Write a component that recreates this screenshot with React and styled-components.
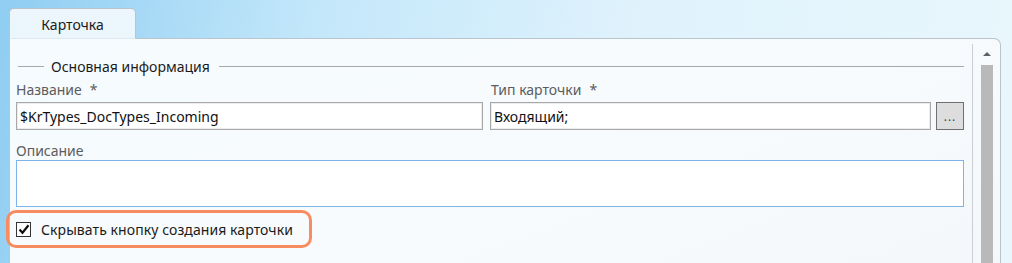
import React from "react";
import styled, { createGlobalStyle } from "styled-components";

const GlobalStyle = createGlobalStyle`
  html, body {
    margin: 0;
    padding: 0;
  }
  body {
    font-family: "Noto Sans", "Open Sans", sans-serif;
    font-size: 14px;
    color: #1b1b1b;
  }
`;

const Screen = styled.div`
  width: 1012px;
  height: 263px;
  box-sizing: border-box;
  overflow: hidden;
  padding: 8px 11px 0 9px;
  display: flex;
  flex-direction: column;
  background: linear-gradient(100deg, #8fcdf2 0%, #c3e7fa 30%, #dff2fc 60%, #e9f7fc 100%);
`;

const TabStrip = styled.div`
  display: flex;
  position: relative;
  z-index: 1;
  margin-bottom: -1px;
`;

const Tab = styled.div`
  width: 127px;
  height: 31px;
  box-sizing: border-box;
  display: flex;
  align-items: center;
  justify-content: center;
  border: 1px solid #b9c4cc;
  border-bottom: 1px solid #dde8f0;
  border-radius: 5px 5px 0 0;
  background: linear-gradient(180deg, #edf6fd 0%, #eaf5fc 100%);
  font-size: 14px;
  color: #1b1b1b;
  padding-top: 1px;
`;

const Panel = styled.div`
  flex: 1;
  display: flex;
  border: 1px solid #b9c4cc;
  border-bottom: none;
  border-radius: 0 7px 0 0;
  background: linear-gradient(160deg, #f5fbfe 0%, #f8fbfd 50%, #f4f8fb 100%);
`;

const Content = styled.div`
  flex: 1;
  padding: 17px 8px 0 6px;
  display: flex;
  flex-direction: column;
`;

const GroupHeader = styled.div`
  display: flex;
  align-items: center;
  height: 20px;
  margin-left: 2px;
  font-size: 14px;
  color: #1b1b1b;

  &::before,
  &::after {
    content: "";
    height: 1px;
    background: #a9a9a9;
  }
  &::before {
    width: 26px;
    margin-right: 7px;
  }
  &::after {
    flex: 1;
    margin-left: 9px;
  }
`;

const FieldGrid = styled.div`
  display: grid;
  grid-template-columns: 467px 1fr;
  column-gap: 7px;
  margin-top: 3px;
`;

const Field = styled.div`
  display: flex;
  flex-direction: column;
`;

const Label = styled.div`
  height: 23px;
  line-height: 22px;
  font-size: 14px;
  color: #5c5c5c;
  padding-left: ${(p) => p.$indent || 0}px;
  white-space: nowrap;

  span {
    margin-left: 8px;
  }
`;

const InputRow = styled.div`
  display: flex;
  gap: 5px;
`;

const TextBox = styled.div`
  flex: 1;
  height: 28px;
  box-sizing: border-box;
  border: 1px solid #a8a8a8;
  box-shadow: inset 0 0 0 1px #ececec;
  background: #ffffff;
  display: flex;
  align-items: center;
  padding-left: 3px;
  font-size: 14px;
  color: #111;
  white-space: nowrap;
`;

const DotsButton = styled.div`
  width: 28px;
  height: 28px;
  box-sizing: border-box;
  border: 1px solid #707070;
  background: #dddddd;
  display: flex;
  align-items: flex-end;
  justify-content: center;
  padding-bottom: 6px;
  font-size: 12px;
  line-height: 12px;
  letter-spacing: 1px;
  color: #444;
`;

const DescLabel = styled(Label)`
  margin-top: 11px;
  height: 19px;
  line-height: 19px;
`;

const TextArea = styled.div`
  height: 47px;
  box-sizing: border-box;
  border: 1px solid #7eb4ea;
  background: #ffffff;
`;

const Highlight = styled.div`
  align-self: flex-start;
  display: inline-flex;
  align-items: center;
  gap: 10px;
  margin: 3px 0 0 -10px;
  height: 38px;
  box-sizing: border-box;
  padding: 0 16px 0 7px;
  border: 3px solid #f68c60;
  border-radius: 10px;
  font-size: 14px;
  letter-spacing: 0.08px;
  color: #1b1b1b;
`;

const CheckBox = styled.div`
  width: 15px;
  height: 15px;
  box-sizing: border-box;
  border: 1px solid #333;
  background: #fff;
  display: flex;
  align-items: center;
  justify-content: center;
`;

const ScrollTrack = styled.div`
  width: 27px;
  margin-top: 5px;
  border-left: 1px solid #c9cfd4;
  display: flex;
  flex-direction: column;
  align-items: center;
`;

const ArrowUp = styled.div`
  margin-top: 8px;
  margin-left: 1px;
  width: 0;
  height: 0;
  border-left: 4px solid transparent;
  border-right: 4px solid transparent;
  border-bottom: 4px solid #606060;
`;

const Thumb = styled.div`
  margin-top: 9px;
  width: 12px;
  flex: 1;
  background: #b9b9b9;
`;

export default function App() {
  return (
    <>
      <GlobalStyle />
      <Screen>
        <TabStrip>
          <Tab>Карточка</Tab>
        </TabStrip>
        <Panel>
          <Content>
            <GroupHeader>Основная информация</GroupHeader>
            <FieldGrid>
              <Field>
                <Label>
                  Название<span>*</span>
                </Label>
                <InputRow>
                  <TextBox>$KrTypes_DocTypes_Incoming</TextBox>
                </InputRow>
              </Field>
              <Field>
                <Label $indent={1}>
                  Тип карточки<span>*</span>
                </Label>
                <InputRow>
                  <TextBox>Входящий;</TextBox>
                  <DotsButton>...</DotsButton>
                </InputRow>
              </Field>
            </FieldGrid>
            <DescLabel>Описание</DescLabel>
            <TextArea />
            <Highlight>
              <CheckBox>
                <svg width="12" height="11" viewBox="0 0 12 11">
                  <path d="M1.5 5.5 L4.5 8.8 L10.5 1.2" fill="none" stroke="#111" strokeWidth="2.2" />
                </svg>
              </CheckBox>
              Скрывать кнопку создания карточки
            </Highlight>
          </Content>
          <ScrollTrack>
            <ArrowUp />
            <Thumb />
          </ScrollTrack>
        </Panel>
      </Screen>
    </>
  );
}
